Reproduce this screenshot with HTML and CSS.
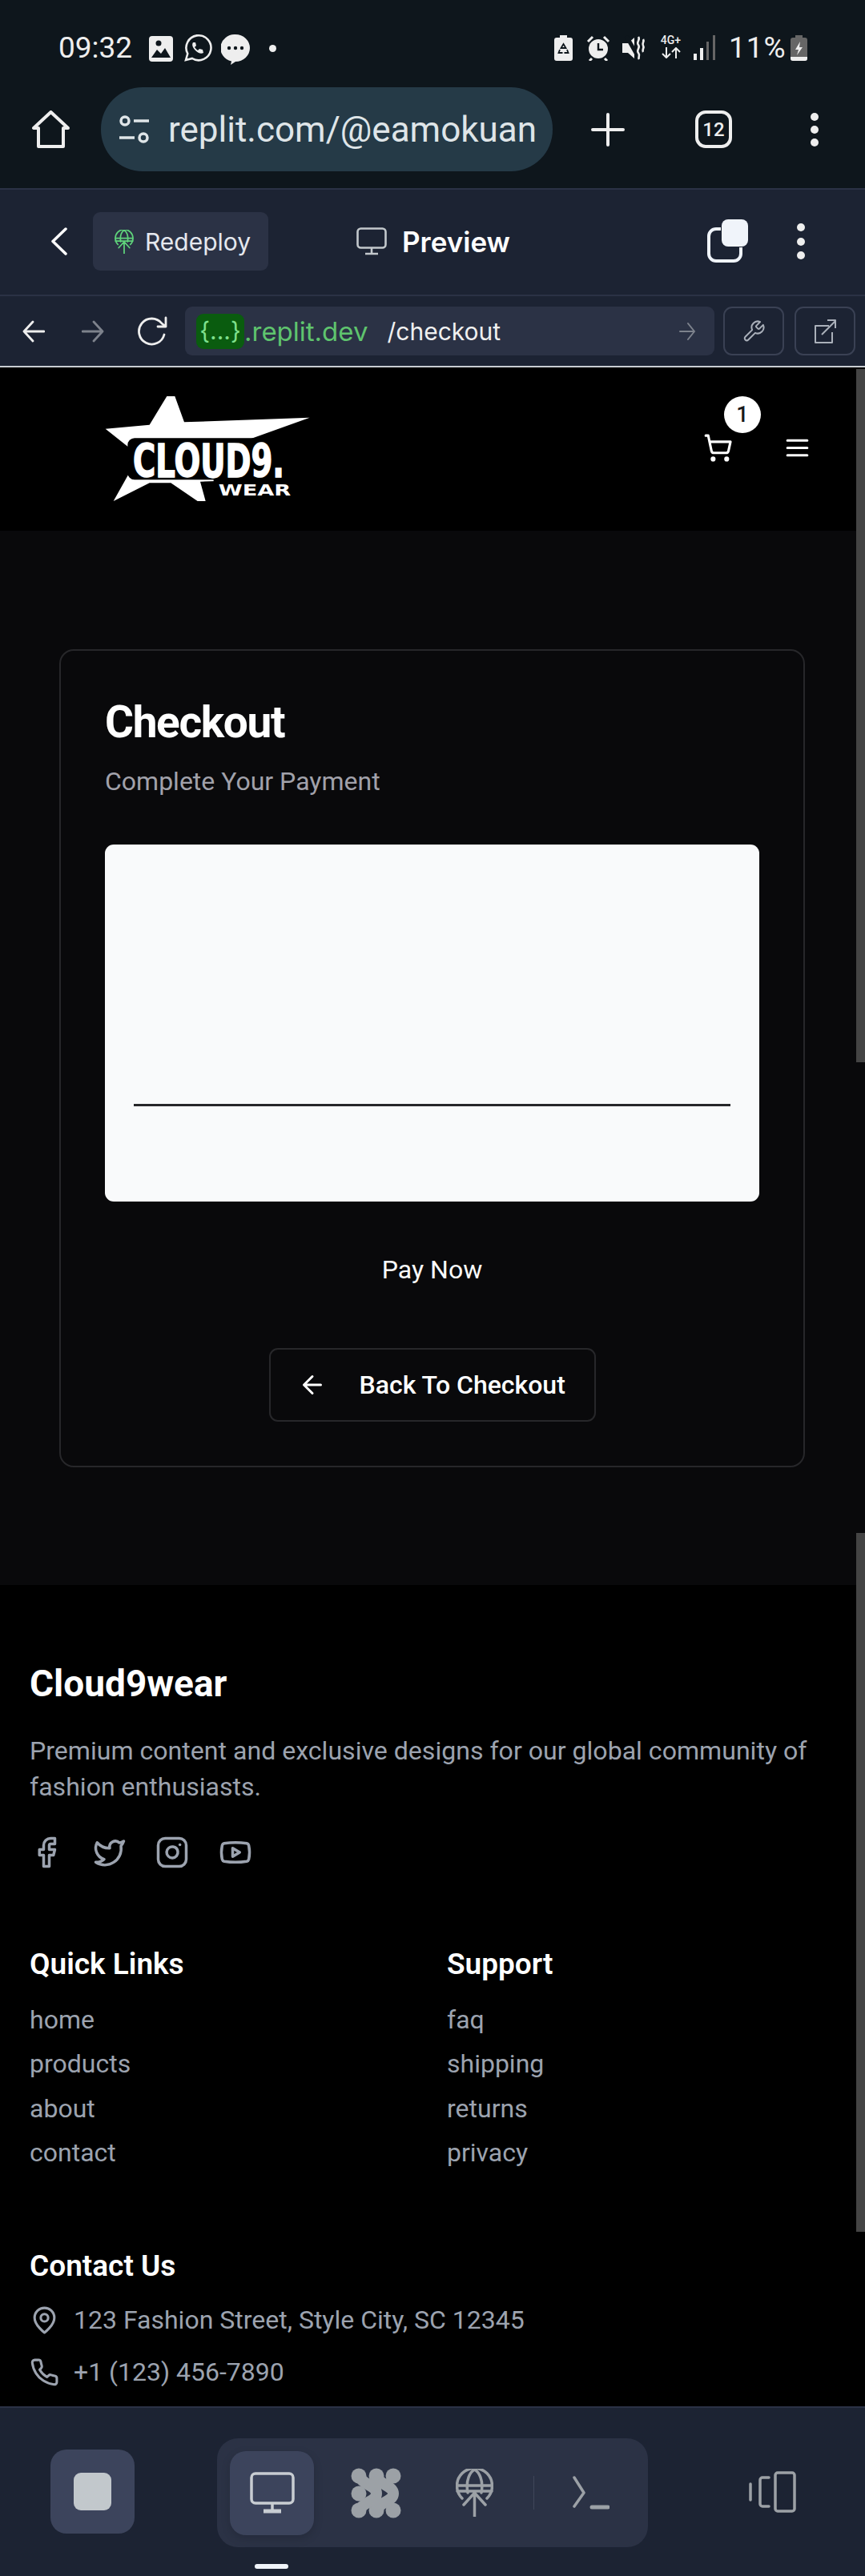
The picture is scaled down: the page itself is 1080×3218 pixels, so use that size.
FILE: index.html
```html
<!DOCTYPE html>
<html lang="en">
<head>
    <meta charset="UTF-8">
    <meta name="viewport" content="width=device-width, initial-scale=1.0">
    <title>Checkout - Cloud9wear</title>
    <link rel="stylesheet" href="styles.css">
</head>
<body>

    <!-- Phone status bar + browser bar -->
    <div class="chrome">
        <div class="status-bar">
            <span class="clock">09:32</span>
            <svg class="st-img" width="30" height="32" viewBox="0 0 30 32"><rect width="30" height="32" rx="4" fill="#eee"/><circle cx="12" cy="9" r="3.5" fill="#0e161c"/><path d="M3 27l7-10 5 5 5-7 7 12z" fill="#0e161c"/></svg>
            <svg class="st-wa" width="36" height="36" viewBox="0 0 36 36" fill="none" stroke="#eee" stroke-width="2.6"><path d="M3 33l2.300-8A15.500 15.500 0 1 1 11 31z"/><path d="M12 11c-2 3 0 7 3 10s7 5 10 3l-1-4-4-1-2 2c-2-1-3-3-4-4l2-2-1-4z" fill="#eee" stroke="none"/></svg>
            <svg class="st-msg" width="36" height="38" viewBox="0 0 36 38"><path d="M18 0a18 17 0 0 1 0 34l-6 4 1-4.500A18 17 0 0 1 18 0z" fill="#eee"/><circle cx="10" cy="17" r="2.200" fill="#0e161c"/><circle cx="18" cy="17" r="2.200" fill="#0e161c"/><circle cx="26" cy="17" r="2.200" fill="#0e161c"/></svg>
            <span class="st-dot"></span>
            <span class="spacer"></span>
            <svg class="st-ic" width="23" height="32" viewBox="0 0 23 32"><path d="M7 0h9v3h4a3 3 0 0 1 3 3v23a3 3 0 0 1-3 3H3a3 3 0 0 1-3-3V6a3 3 0 0 1 3-3h4z" fill="#eee"/><path d="M11.500 11l3 5h-6zM7 18l-1.500 4h5M16 18l1.500 4h-5" fill="none" stroke="#0e161c" stroke-width="1.800"/></svg>
            <svg class="st-ic st-alarm" width="30" height="32" viewBox="0 0 30 32"><circle cx="15" cy="17" r="12" fill="#eee"/><path d="M15 10v8h6" fill="none" stroke="#0e161c" stroke-width="2.400"/><path d="M2 8l6-6M28 8l-6-6M7 29l-3 3M23 29l3 3" stroke="#eee" stroke-width="3"/></svg>
            <svg class="st-ic st-mute" width="30" height="32" viewBox="0 0 30 32"><path d="M0 10h7l8-7v26l-8-7H0z" fill="#eee"/><path d="M5 1l17 30" stroke="#0e161c" stroke-width="5"/><path d="M20 2c3 4-3 6 0 10s-3 6 0 10 -1 5 1 8M26 5c2 3-2 5 0 8s-2 5 0 8" fill="none" stroke="#eee" stroke-width="2.600"/></svg>
            <div class="st-net">
                <span>4G+</span>
                <svg width="26" height="14" viewBox="0 0 26 14" fill="none" stroke="#eee" stroke-width="2"><path d="M7 0v13M2 8l5 5 5-5M19 14V1M14 6l5-5 5 5"/></svg>
            </div>
            <svg class="st-ic st-signal" width="27" height="31" viewBox="0 0 27 31"><rect x="0" y="23" width="4" height="8" fill="#eee"/><rect x="8" y="16" width="4" height="15" fill="#eee"/><rect x="16" y="8" width="3" height="23" fill="#666"/><rect x="24" y="0" width="3" height="31" fill="#666"/></svg>
            <span class="st-batt-txt">11%</span>
            <svg class="st-ic st-batt" width="21" height="32" viewBox="0 0 21 32"><path d="M6 0h9v3h3a3 3 0 0 1 3 3v23a3 3 0 0 1-3 3H3a3 3 0 0 1-3-3V6a3 3 0 0 1 3-3h3z" fill="#666"/><path d="M0 27h21v2a3 3 0 0 1-3 3H3a3 3 0 0 1-3-3z" fill="#eee"/><path d="M12 8l-6 10h4l-2 7 7-10h-4z" fill="#eee"/></svg>
        </div>

        <div class="browser-bar">
            <svg class="br-home" width="47" height="47" viewBox="0 0 47 47" fill="none" stroke="#eee" stroke-width="4" stroke-linejoin="round"><path d="M23.500 2L2 22h6v23h31V22h6z"/></svg>
            <div class="omnibox">
                <svg width="39" height="36" viewBox="0 0 39 36" fill="none" stroke="#dfe5e8" stroke-width="3.500"><circle cx="8" cy="7" r="5"/><path d="M19 7h19M1 28h19"/><circle cx="31" cy="28" r="5"/></svg>
                <span>replit.com/@eamokuan</span>
            </div>
            <svg class="br-plus" width="42" height="42" viewBox="0 0 42 42" stroke="#eee" stroke-width="4" stroke-linecap="round"><path d="M21 2v38M2 21h38"/></svg>
            <div class="tab-count">12</div>
            <div class="dots br-dots"><i></i><i></i><i></i></div>
        </div>
    </div>

    <!-- Replit toolbar -->
    <div class="replit-bar">
        <svg class="rp-back" width="21" height="35" viewBox="0 0 21 35" fill="none" stroke="#fff" stroke-width="3.500" stroke-linecap="round" stroke-linejoin="round"><path d="M19 2L3 17.500 19 33"/></svg>
        <div class="redeploy">
            <svg width="24" height="30" viewBox="0 0 47 60" fill="none" stroke="#5fd37b" stroke-width="3.500" stroke-linecap="round"><path d="M8 37A22 22 0 1 1 39 37"/><path d="M15 30C12 14 18 4 23.500 1 29 4 35 14 32 30M2 21h43M2 28h43M23.500 31v29M10 45l13.500-15L37 45"/></svg>
            <span>Redeploy</span>
        </div>
        <svg class="rp-monitor" width="38" height="35" viewBox="0 0 38 35" fill="none" stroke="#c2c8cc" stroke-width="2.600"><rect x="1.500" y="1.500" width="35" height="24" rx="4"/><path d="M19 26v7M11 33h16"/></svg>
        <span class="rp-title">Preview</span>
        <span class="spacer"></span>
        <div class="rp-copy"><i></i></div>
        <div class="dots rp-dots"><i></i><i></i><i></i></div>
    </div>

    <div class="url-row">
        <svg class="ur-back" width="28" height="28" viewBox="0 0 28 28" fill="none" stroke="#eee" stroke-width="2.800" stroke-linecap="round" stroke-linejoin="round"><path d="M13 2L2 14l11 12M2 14h25"/></svg>
        <svg class="ur-fwd" width="28" height="28" viewBox="0 0 28 28" fill="none" stroke="#7d828c" stroke-width="2.800" stroke-linecap="round" stroke-linejoin="round"><path d="M15 2l11 12-11 12M26 14H1"/></svg>
        <svg class="ur-reload" width="38" height="40" viewBox="0 0 38 40" fill="none" stroke="#eee" stroke-width="2.800" stroke-linecap="round" stroke-linejoin="round"><path d="M34 24a16 16 0 1 1-3-14l5 4M36 3v11H26"/></svg>
        <div class="url-field">
            <span class="url-chip">{...}</span>
            <span class="url-host">.replit.dev</span>
            <span class="url-path">/checkout</span>
            <span class="spacer"></span>
            <svg width="20" height="24" viewBox="0 0 20 24" fill="none" stroke="#7d828c" stroke-width="2" stroke-linecap="round" stroke-linejoin="round"><path d="M11 2l8 10-8 10M19 12H1"/></svg>
        </div>
        <div class="url-btn"><svg width="30" height="34" viewBox="0 0 24 24" fill="none" stroke="#aab0ba" stroke-width="1.600" stroke-linejoin="round"><path d="M14.700 6.300a1 1 0 0 0 0 1.400l1.600 1.600a1 1 0 0 0 1.400 0l3.770-3.770a6 6 0 0 1-7.940 7.940l-6.910 6.910a2.120 2.120 0 0 1-3-3l6.910-6.910a6 6 0 0 1 7.940-7.940l-3.760 3.760z"/></svg></div>
        <div class="url-btn"><svg width="30" height="34" viewBox="0 0 30 34" fill="none" stroke="#aab0ba" stroke-width="2" stroke-linejoin="round"><path d="M20 10H3v21h21V18M11 21L28 4M18 3h10v10"/></svg></div>
    </div>

    <div class="page-line"></div>

    <!-- Site header -->
    <header class="site-header">
        <svg class="logo" width="260" height="132" viewBox="150 75 780 396">
            <polygon fill="#fff" points="385,75 415,75 450,172 920,155 690,238 830,385 510,395 530,468 500,468 400,400 320,400 185,468 240,370 240,265 155,197 320,182"/>
            <rect x="238" y="232" width="640" height="156" rx="26" fill="#000"/>
            <rect x="560" y="385" width="320" height="90" fill="#000"/>
            <text class="logo-main" x="258" y="378" textLength="567" lengthAdjust="spacingAndGlyphs">CLOUD9.</text>
            <text class="logo-sub" x="578" y="448" textLength="272" lengthAdjust="spacingAndGlyphs">WEAR</text>
        </svg>
        <span class="spacer"></span>
        <div class="cart">
            <svg width="37" height="37" viewBox="0 0 24 24" fill="none" stroke="#fff" stroke-width="2" stroke-linecap="round" stroke-linejoin="round"><circle cx="8" cy="21" r="1"/><circle cx="19" cy="21" r="1"/><path d="M2.050 2.050h2l2.660 12.420a2 2 0 0 0 2 1.580h9.780a2 2 0 0 0 1.950-1.570l1.650-7.430H5.120"/></svg>
            <span class="cart-badge">1</span>
        </div>
        <svg class="menu-btn" width="37" height="37" viewBox="0 0 24 24" stroke="#fff" stroke-width="2" stroke-linecap="round"><path d="M4 6h16M4 12h16M4 18h16"/></svg>
    </header>

    <main class="checkout">
        <div class="card">
            <h1>Checkout</h1>
            <p class="sub">Complete Your Payment</p>

            <div class="pay-frame">
                <div class="pay-line"></div>
            </div>

            <button class="pay-btn">Pay Now</button>

            <a class="back-btn" href="#">
                <svg width="36" height="36" viewBox="0 0 24 24" fill="none" stroke="#fff" stroke-width="2" stroke-linecap="round" stroke-linejoin="round"><path d="m12 19-7-7 7-7M19 12H5"/></svg>
                Back To Checkout
            </a>
        </div>
    </main>

    <footer class="site-footer">
        <h2>Cloud9wear</h2>
        <p class="about">Premium content and exclusive designs for our global community of fashion enthusiasts.</p>

        <div class="socials">
            <svg viewBox="0 0 24 24"><path d="M18 2h-3a5 5 0 0 0-5 5v3H7v4h3v8h4v-8h3l1-4h-4V7a1 1 0 0 1 1-1h3z"/></svg>
            <svg viewBox="0 0 24 24"><path d="M22 4s-.7 2.100-2 3.400c1.600 10-9.400 17.300-18 11.600 2.200.1 4.400-.6 6-2C3 15.500.5 9.600 3 5c2.200 2.600 5.600 4.100 9 4-.9-4.200 4-6.600 7-3.800 1.100 0 3-1.200 3-1.200z"/></svg>
            <svg viewBox="0 0 24 24"><rect x="2" y="2" width="20" height="20" rx="5"/><path d="M16 11.370A4 4 0 1 1 12.630 8 4 4 0 0 1 16 11.370z"/><path d="M17.500 6.500h.01"/></svg>
            <svg viewBox="0 0 24 24"><path d="M2.500 17a24.120 24.120 0 0 1 0-10 2 2 0 0 1 1.400-1.400 49.560 49.560 0 0 1 16.200 0A2 2 0 0 1 21.500 7a24.120 24.120 0 0 1 0 10 2 2 0 0 1-1.400 1.400 49.550 49.550 0 0 1-16.200 0A2 2 0 0 1 2.500 17"/><path d="m10 15 5-3-5-3z"/></svg>
        </div>

        <div class="link-cols">
            <div>
                <h3>Quick Links</h3>
                <ul>
                    <li>home</li>
                    <li>products</li>
                    <li>about</li>
                    <li>contact</li>
                </ul>
            </div>
            <div>
                <h3>Support</h3>
                <ul>
                    <li>faq</li>
                    <li>shipping</li>
                    <li>returns</li>
                    <li>privacy</li>
                </ul>
            </div>
        </div>

        <h3 class="contact-title">Contact Us</h3>
        <div class="contact-row">
            <svg viewBox="0 0 24 24"><path d="M20 10c0 6-8 12-8 12s-8-6-8-12a8 8 0 0 1 16 0Z"/><circle cx="12" cy="10" r="3"/></svg>
            123 Fashion Street, Style City, SC 12345
        </div>
        <div class="contact-row">
            <svg viewBox="0 0 24 24"><path d="M22 16.920v3a2 2 0 0 1-2.180 2 19.790 19.790 0 0 1-8.630-3.070 19.500 19.500 0 0 1-6-6 19.790 19.790 0 0 1-3.070-8.670A2 2 0 0 1 4.110 2h3a2 2 0 0 1 2 1.720 12.840 12.840 0 0 0 .7 2.810 2 2 0 0 1-.45 2.110L8.090 9.910a16 16 0 0 0 6 6l1.270-1.270a2 2 0 0 1 2.110-.45 12.840 12.840 0 0 0 2.810.7A2 2 0 0 1 22 16.920z"/></svg>
            +1 (123) 456-7890
        </div>
    </footer>

    <!-- Replit bottom bar -->
    <div class="bottom-bar">
        <div class="stop-btn"><i></i></div>
        <div class="tool-group">
            <div class="tool tool-active">
                <svg width="56" height="52" viewBox="0 0 56 52" fill="none" stroke="#c8cdd2" stroke-width="3.500"><rect x="2" y="2" width="52" height="37" rx="5"/><path d="M28 40v9"/><path d="M17 49h22" stroke-width="5"/></svg>
            </div>
            <div class="tool">
                <svg width="63" height="63" viewBox="0 0 63 63" fill="#9ca1a6"><circle cx="10" cy="10" r="9.500"/><circle cx="32" cy="10" r="9.500"/><circle cx="53" cy="10" r="9.500"/><circle cx="10" cy="32" r="9.500"/><circle cx="10" cy="53" r="9.500"/><circle cx="32" cy="53" r="9.500"/><circle cx="53" cy="53" r="9.500"/><path d="M10 10C16 22 32 22 32 32 32 42 16 42 10 53M32 10C36 22 53 22 53 32 53 42 36 42 32 53" fill="none" stroke="#9ca1a6" stroke-width="14"/></svg>
            </div>
            <div class="tool">
                <svg width="47" height="60" viewBox="0 0 47 60" fill="none" stroke="#9ca1a6" stroke-width="3.500" stroke-linecap="round"><path d="M8 37A22 22 0 1 1 39 37"/><path d="M15 30C12 14 18 4 23.500 1 29 4 35 14 32 30M2 21h43M2 28h43M23.500 31v29M10 45l13.500-15L37 45"/></svg>
            </div>
            <span class="tool-sep"></span>
            <svg class="tool-term" width="46" height="42" viewBox="0 0 46 42" fill="none" stroke="#9ca1a6" stroke-width="3.500" stroke-linecap="round" stroke-linejoin="round"><path d="M2 2l12 19L2 38"/><path d="M24 39h20" stroke-width="5"/></svg>
        </div>
        <span class="spacer"></span>
        <svg class="panel-ic" width="59" height="52" viewBox="0 0 59 52" fill="none" stroke="#9ca1a6" stroke-width="3.500" stroke-linecap="round" stroke-linejoin="round"><rect x="33" y="2" width="24" height="48" rx="3"/><path d="M25 8h-8a3 3 0 0 0-3 3v30a3 3 0 0 0 3 3h8M2 16v20"/></svg>
    </div>
    <div class="home-bar"></div>

    <!-- scrollbar thumbs sit on top of the page -->
    <div class="thumb thumb-page"></div>
    <div class="thumb thumb-footer"></div>

</body>
</html>
```

FILE: styles.css
```css
* {
    box-sizing: border-box;
    margin: 0;
    padding: 0;
}

html, body {
    background-color: #000;
}

body {
    font-family: 'Roboto', 'Inter', sans-serif;
    width: 1080px;
    height: 3218px;
    position: relative;
    display: flex;
    flex-direction: column;
    overflow: hidden;
    color: #fff;
}

svg {
    flex: none;
    display: block;
}

.spacer {
    flex: 1;
}

.dots {
    display: flex;
    flex-direction: column;
    align-items: center;
    justify-content: space-between;
    width: 10px;
}

.dots i {
    display: block;
    width: 10px;
    height: 10px;
    border-radius: 50%;
    background-color: #eee;
}

/* phone status + browser */
.chrome {
    height: 235px;
    background-color: #0e161c;
}

.status-bar {
    height: 109px;
    padding: 42px 72px 0 73px;
    display: flex;
    align-items: flex-start;
    color: #eee;
}

.clock {
    font-size: 37px;
    line-height: 36px;
    width: 113px;
}

.st-img {
    margin-top: 3px;
}

.st-wa {
    margin-left: 13px;
}

.st-msg {
    margin-left: 11px;
    margin-top: 1px;
}

.st-dot {
    width: 9px;
    height: 9px;
    margin: 14px 0 0 24px;
    border-radius: 50%;
    background-color: #eee;
}

.st-ic {
    margin-top: 2px;
}

.st-alarm {
    margin-left: 17px;
}

.st-mute {
    margin-left: 15px;
}

.st-net {
    margin-left: 15px;
    width: 31px;
    display: flex;
    flex-direction: column;
    align-items: center;
    font-size: 14px;
    line-height: 17px;
    font-weight: 500;
}

.st-signal {
    margin-left: 13px;
}

.st-batt-txt {
    margin-left: 17px;
    font-size: 37px;
    line-height: 36px;
    letter-spacing: 1px;
    width: 77px;
}

.browser-bar {
    height: 126px;
    padding-left: 40px;
    display: flex;
    align-items: center;
    position: relative;
}

.br-home {
    margin-top: -21px;
}

.omnibox {
    width: 564px;
    height: 105px;
    margin: -21px 0 0 39px;
    padding-left: 22px;
    display: flex;
    align-items: center;
    gap: 23px;
    background-color: #253a47;
    border-radius: 52px;
    font-size: 44px;
    color: #dfe5e8;
    white-space: nowrap;
    overflow: hidden;
}

.br-plus {
    margin: -21px 0 0 48px;
}

.tab-count {
    width: 46px;
    height: 47px;
    margin: -21px 0 0 88px;
    border: 4px solid #eee;
    border-radius: 13px;
    display: flex;
    align-items: center;
    justify-content: center;
    font-size: 24px;
    font-weight: 500;
    color: #eee;
}

.br-dots {
    height: 42px;
    margin: -21px 0 0 98px;
}

/* replit toolbar */
.replit-bar {
    height: 135px;
    padding: 0 75px 2px 63px;
    display: flex;
    align-items: center;
    background-color: #1c2333;
    border-top: 2px solid #2b3245;
    border-bottom: 2px solid #2b3245;
    font-family: 'Inter', sans-serif;
    font-size: 31px;
}

.redeploy {
    width: 219px;
    height: 73px;
    margin-left: 32px;
    padding-left: 27px;
    display: flex;
    align-items: center;
    gap: 14px;
    background-color: #2b3245;
    border-radius: 9px;
    color: #e5e8ee;
    font-size: 30px;
}

.rp-monitor {
    margin-left: 110px;
}

.rp-title {
    margin-left: 19px;
    font-size: 35px;
    font-weight: 600;
}

.rp-copy {
    width: 44px;
    height: 44px;
    margin: 8px 0 0 -6px;
    border: 4px solid #f0f4fa;
    border-radius: 11px;
    position: relative;
}

.rp-copy i {
    position: absolute;
    left: 14px;
    top: -14px;
    width: 33px;
    height: 34px;
    background-color: #f0f4fa;
    border-radius: 8px;
    box-shadow: 0 0 0 1px #1c2333;
}

.rp-dots {
    height: 45px;
    margin-left: 68px;
}

.url-row {
    height: 87px;
    padding-left: 28px;
    display: flex;
    align-items: center;
    background-color: #1c2333;
    font-family: 'Inter', sans-serif;
}

.ur-fwd {
    margin-left: 46px;
}

.ur-reload {
    margin-left: 41px;
}

.url-field {
    width: 661px;
    height: 61px;
    margin-left: 22px;
    padding: 0 24px 0 14px;
    display: flex;
    align-items: center;
    background-color: #2b3245;
    border-radius: 9px;
    font-size: 30px;
}

.url-chip {
    width: 60px;
    height: 44px;
    line-height: 42px;
    text-align: center;
    background-color: #0a5c0f;
    border-radius: 9px;
    color: #7fe08d;
}

.url-host {
    font-size: 33px;
    color: #5fc46e;
}

.url-path {
    margin-left: 24px;
    color: #f0f0f0;
}

.url-btn {
    width: 76px;
    height: 61px;
    margin-left: 11px;
    display: flex;
    align-items: center;
    justify-content: center;
    border: 2px solid #3a4154;
    border-radius: 11px;
}

.url-btn + .url-btn {
    margin-left: 13px;
}

.page-line {
    height: 2px;
    background-color: #c8cdd2;
}

/* site header */
.site-header {
    height: 204px;
    padding: 36px 66px 0 130px;
    display: flex;
    align-items: flex-start;
    background-color: #000;
}

.logo {
    overflow: visible;
}

.logo-main {
    font-family: 'DejaVu Sans', sans-serif;
    font-weight: 700;
    font-size: 170px;
    fill: #fff;
    stroke: #fff;
    stroke-width: 5px;
}

.logo-sub {
    font-family: 'DejaVu Sans', sans-serif;
    font-weight: 700;
    font-size: 56px;
    fill: #fff;
}

.cart {
    position: relative;
    margin-top: 46px;
}

.cart-badge {
    position: absolute;
    left: 26px;
    top: -46px;
    width: 46px;
    height: 46px;
    border-radius: 50%;
    background-color: #fff;
    color: #18181b;
    font-size: 27px;
    font-weight: 500;
    line-height: 46px;
    text-align: center;
}

.menu-btn {
    margin: 46px 0 0 62px;
}

/* checkout card */
.checkout {
    height: 1317px;
    padding: 148px 75px 147px 74px;
    background-color: #09090b;
}

.card {
    height: 1022px;
    padding: 0 55px;
    display: flex;
    flex-direction: column;
    background-color: #09090b;
    border: 2px solid #27272a;
    border-radius: 18px;
}

.card h1 {
    margin-top: 57px;
    font-size: 55px;
    line-height: 64px;
    font-weight: 700;
    letter-spacing: -1.350px;
}

.sub {
    margin-top: 20px;
    font-size: 32px;
    line-height: 45px;
    color: #a1a1aa;
}

.pay-frame {
    height: 446px;
    margin-top: 56px;
    padding: 324px 36px 0;
    background-color: #f9fafb;
    border-radius: 11px;
}

.pay-line {
    height: 3px;
    background-color: #27272a;
}

.pay-btn {
    margin-top: 62px;
    height: 45px;
    background: none;
    border: none;
    color: #fafafa;
    font-family: inherit;
    font-size: 32px;
    font-weight: 400;
}

.back-btn {
    align-self: center;
    width: 408px;
    height: 92px;
    margin-top: 76px;
    padding-left: 34px;
    display: flex;
    align-items: center;
    gap: 41px;
    border: 2px solid #27272a;
    border-radius: 11px;
    color: #fff;
    font-size: 32px;
    font-weight: 500;
    text-decoration: none;
    white-space: nowrap;
}

/* footer */
.site-footer {
    flex: 1;
    min-height: 0;
    padding: 0 37px;
    background-color: #000;
    overflow: hidden;
}

.site-footer h2 {
    margin-top: 90px;
    font-size: 46px;
    line-height: 67px;
    font-weight: 700;
}

.about {
    margin-top: 28px;
    font-size: 32.100px;
    line-height: 45px;
    color: #9ca3af;
}

.socials {
    margin-top: 38px;
    display: flex;
    gap: 36.500px;
}

.socials svg,
.contact-row svg {
    fill: none;
    stroke: #9ca3af;
    stroke-width: 2;
    stroke-linecap: round;
    stroke-linejoin: round;
}

.socials svg {
    width: 42px;
    height: 42px;
}

.link-cols {
    margin-top: 92px;
    display: grid;
    grid-template-columns: 1fr 1fr;
    gap: 36px;
}

.site-footer h3 {
    font-size: 37px;
    line-height: 54px;
    font-weight: 600;
}

.site-footer ul {
    margin-top: 15px;
    list-style: none;
}

.site-footer li {
    font-size: 32px;
    line-height: 55.400px;
    color: #9ca3af;
}

.contact-title {
    margin-top: 86px;
}

.contact-row {
    display: flex;
    align-items: center;
    gap: 18px;
    height: 65px;
    font-size: 32px;
    color: #9ca3af;
}

.contact-title + .contact-row {
    margin-top: 8px;
}

.contact-row svg {
    width: 37px;
    height: 37px;
}

/* replit bottom bar */
.bottom-bar {
    height: 212px;
    padding: 38px 86px 0 63px;
    display: flex;
    align-items: flex-start;
    background-color: #1c2333;
    border-top: 2px solid #2b3245;
}

.stop-btn {
    width: 105px;
    height: 105px;
    margin-top: 14px;
    display: flex;
    align-items: center;
    justify-content: center;
    background-color: #3c445c;
    border-radius: 20px;
}

.stop-btn i {
    width: 47px;
    height: 47px;
    background-color: #c2c8cc;
    border-radius: 9px;
}

.tool-group {
    width: 538px;
    height: 136px;
    margin-left: 103px;
    padding: 16px;
    display: flex;
    align-items: center;
    background-color: #2b3245;
    border-radius: 26px;
}

.tool {
    width: 105px;
    height: 105px;
    flex: none;
    display: flex;
    align-items: center;
    justify-content: center;
    border-radius: 20px;
}

.tool-active {
    background-color: #3c445c;
    box-shadow: 0 4px 12px rgba(0, 0, 0, 0.15);
}

.tool + .tool {
    margin-left: 25px;
}

.tool + .tool + .tool {
    margin-left: 18px;
}

.tool-sep {
    width: 1px;
    height: 42px;
    margin-left: 21px;
    background-color: #3f4759;
}

.tool-term {
    margin-left: 48px;
}

.panel-ic {
    margin-top: 41px;
}

.home-bar {
    position: absolute;
    left: 318px;
    top: 3203px;
    width: 42px;
    height: 6px;
    border-radius: 3px;
    background-color: #f0f4fa;
}

.thumb {
    position: absolute;
    right: 0;
    width: 11px;
    background-color: #444;
}

.thumb-page {
    top: 461px;
    height: 866px;
}

.thumb-footer {
    top: 1915px;
    height: 873px;
}
```
